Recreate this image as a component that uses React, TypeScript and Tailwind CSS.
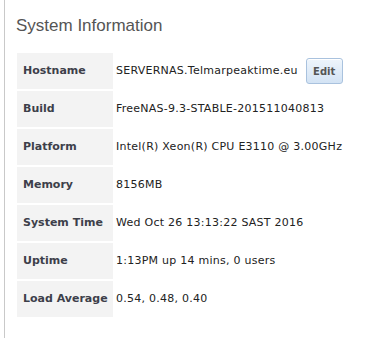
import React from 'react';

const rows: { label: string; value: string; edit?: boolean }[] = [
  { label: 'Hostname', value: 'SERVERNAS.Telmarpeaktime.eu', edit: true },
  { label: 'Build', value: 'FreeNAS-9.3-STABLE-201511040813' },
  { label: 'Platform', value: 'Intel(R) Xeon(R) CPU E3110 @ 3.00GHz' },
  { label: 'Memory', value: '8156MB' },
  { label: 'System Time', value: 'Wed Oct 26 13:13:22 SAST 2016' },
  { label: 'Uptime', value: '1:13PM up 14 mins, 0 users' },
  { label: 'Load Average', value: '0.54, 0.48, 0.40' },
];

export default function App() {
  return (
    <div className="w-[370px] h-[338px] bg-white overflow-hidden">
      <div className="ml-[4px] h-full border-l border-[#c9c9c9] pt-[16px]">
        {/* Title */}
        <h2 className="pl-[11px] h-[20px] leading-[20px] text-[17px] text-[#555555] font-['Liberation_Sans',Arial,sans-serif]">
          System Information
        </h2>

        {/* Info rows */}
        <div className="mt-[17px] ml-[12px] flex flex-col gap-[2px] font-['DejaVu_Sans',Verdana,sans-serif] text-[11px]">
          {rows.map((row) => (
            <div key={row.label} className="flex h-[36px]">
              <div className="w-[96px] shrink-0 bg-[#f3f3f3] pl-[6px] flex items-center font-bold text-[#3d3f4a] whitespace-nowrap">
                {row.label}
              </div>
              <div className="pl-[3px] flex items-center text-[#222222] tracking-[0.25px] whitespace-nowrap">
                {row.value}
                {row.edit && (
                  <button className="ml-[8px] w-[37px] h-[26px] rounded-[3px] border border-[#a9c2de] bg-gradient-to-b from-[#eef5fc] to-[#d3e3f4] text-[10px] tracking-normal font-bold text-[#555555] shadow-[inset_0_1px_0_#ffffff]">
                    Edit
                  </button>
                )}
              </div>
            </div>
          ))}
        </div>
      </div>
    </div>
  );
}
